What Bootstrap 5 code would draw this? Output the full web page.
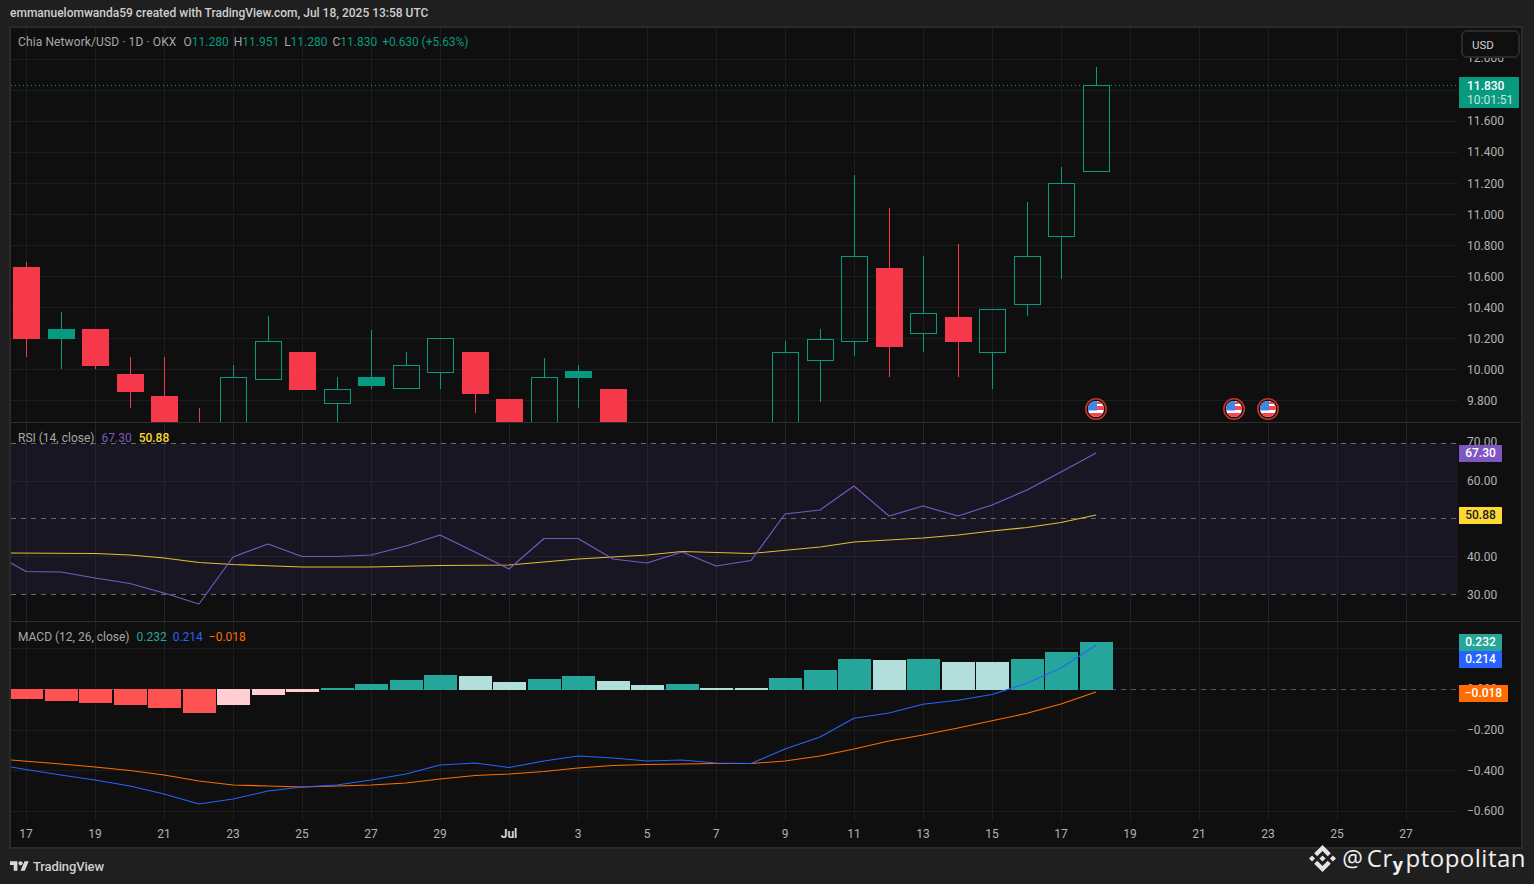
<!DOCTYPE html>
<html lang="en">
<head>
<meta charset="utf-8">
<title>Chia Network/USD chart</title>
<link href="https://cdn.jsdelivr.net/npm/bootstrap@5.3.0/dist/css/bootstrap.min.css" rel="stylesheet">
<style>
html,body{height:884px;overflow:hidden;margin:0}
body{background:#1f1f1f;color:#b8b8b8;font-family:Roboto,"Liberation Sans",sans-serif;font-size:12px;position:relative}
.snap-head{height:26px;padding-left:10px;font-size:12px;font-weight:500;color:#d0d0d0}
.chart-frame{margin-left:9px;width:1514px;height:823px;border:2px solid #2a2a2a;background:#0f0f0f}
.pane{width:100%;display:block}
.pane-main{height:394px}
.pane-rsi{height:198px}
.pane-macd{height:200px}
.pane-time{height:25px}
.pane-sep{height:1px;background:#2e2e2e}
svg text{font-family:Roboto,"Liberation Sans",sans-serif;font-size:12px;fill:#b2b2b2}
svg text.jul{font-weight:700;fill:#d8d8d8}
.legend-row{left:7px;font-size:12px;color:#a8a8a8;white-space:nowrap;line-height:16px;display:flex;gap:7px}
.legend-main{top:6px;gap:5px}
.legend-rsi{top:7px}
.legend-macd{top:7px;gap:6px}
.sym-name{letter-spacing:.11px;margin-right:2px}
.macd-name{margin-right:1px}
.last-chg{letter-spacing:-.07px}
.t-up{color:#089981}.t-purple{color:#7e57c2}.t-yellow{color:#fdd835;font-weight:500}.t-teal{color:#26a69a}.t-blue{color:#2962ff}.t-orange{color:#ff6d00}
.usd-btn{right:1px;top:2px;width:59px;height:28px;border:2px solid #2a2a2a;border-radius:6px;background:#0f0f0f;color:#d0d0d0;font-size:11.5px;padding:1px 0 0 9px;line-height:18px}
.price-tag{left:1448px;width:43px;height:17px;line-height:17px;text-align:center;font-size:12px;color:#fff;font-weight:500;border-radius:0 1px 1px 0}
.tag-last{top:49px;width:60px;height:31px;background:#089981;line-height:14px;text-align:left;padding:2px 0 0 8px}
.tag-last span{display:block;color:#c6e6df;font-weight:400}
.tag-rsi{top:22px;background:#7e57c2}
.tag-ma{top:84px;background:#fdd835;color:#222}
.tag-hist{top:12px;background:#26a69a}
.tag-mline{top:29px;background:#2962ff}
.tag-sig{top:63px;width:49px;background:#ff6d00}
.tv-foot{height:35px;padding-left:10px;gap:4px;color:#d0d0d0;font-size:13px;font-weight:500;letter-spacing:-.01em}
.wm{right:8px;bottom:12px;gap:4px;color:#f0f0f0}
.wm-logo{margin-right:2px}
.wm-at{font-family:"Open Sans",sans-serif;font-size:23px;line-height:28px}
.wm-name{font-family:"Open Sans",sans-serif;font-size:24px;line-height:28px;letter-spacing:.5px}
.wm-glitch{font-size:18px;font-weight:700;vertical-align:-4px;letter-spacing:2.5px;line-height:0}
</style>
</head>
<body>
<div class="snap-head d-flex align-items-center">emmanuelomwanda59 created with TradingView.com, Jul 18, 2025 13:58 UTC</div>
<div class="chart-frame d-flex flex-column">
  <div class="position-relative">
    <svg class="pane pane-main" id="pMain" viewBox="11 28 1510 394"></svg>
    <div class="legend-row legend-main position-absolute">
      <span class="sym-name">Chia Network/USD · 1D · OKX</span>
      <span>O<span class="t-up">11.280</span></span>
      <span>H<span class="t-up">11.951</span></span>
      <span>L<span class="t-up">11.280</span></span>
      <span>C<span class="t-up">11.830</span></span>
      <span class="t-up last-chg">+0.630 (+5.63%)</span>
    </div>
    <button type="button" class="usd-btn position-absolute text-start">USD</button>
    <div class="price-tag tag-last position-absolute">11.830<span>10:01:51</span></div>
  </div>
  <div class="pane-sep"></div>
  <div class="position-relative">
    <svg class="pane pane-rsi" id="pRsi" viewBox="11 423 1510 198"></svg>
    <div class="legend-row legend-rsi position-absolute"><span>RSI (14, close)</span><span class="t-purple">67.30</span><span class="t-yellow">50.88</span></div>
    <div class="price-tag tag-rsi position-absolute">67.30</div>
    <div class="price-tag tag-ma position-absolute">50.88</div>
  </div>
  <div class="pane-sep"></div>
  <div class="position-relative">
    <svg class="pane pane-macd" id="pMacd" viewBox="11 622 1510 200"></svg>
    <div class="legend-row legend-macd position-absolute"><span class="macd-name">MACD (12, 26, close)</span><span class="t-teal">0.232</span><span class="t-blue">0.214</span><span class="t-orange">−0.018</span></div>
    <div class="price-tag tag-hist position-absolute">0.232</div>
    <div class="price-tag tag-mline position-absolute">0.214</div>
    <div class="price-tag tag-sig position-absolute">−0.018</div>
  </div>
  <svg class="pane pane-time" id="pTime" viewBox="11 822 1510 25"></svg>
</div>
<div class="tv-foot d-flex align-items-center">
  <svg width="19" height="15" viewBox="0 0 36 28" fill="#d8d8d8" aria-hidden="true"><path d="M14 22H7V11H0V4h14v18zM28 22h-8l7.5-18h8L28 22z"/><circle cx="20" cy="8" r="4"/></svg>
  <span>TradingView</span>
</div>
<div class="wm position-absolute d-flex align-items-center">
  <svg class="wm-logo" width="27" height="27" viewBox="0 0 126.61 126.61" fill="#e4e4e4" aria-hidden="true"><path d="M38.73 53.2 63.3 28.63l24.58 24.58 14.3-14.3L63.3 0 24.43 38.9zM0 63.31l14.3-14.3 14.3 14.3-14.3 14.3zM38.73 73.41 63.3 97.99l24.58-24.58 14.3 14.29-38.88 38.91-38.87-38.89zM97.99 63.31l14.3-14.3 14.32 14.3-14.32 14.3zM77.83 63.29 63.3 48.75 48.79 63.27 63.3 77.79z"/></svg>
  <span class="wm-at">@</span>
  <span class="wm-name">Cr<span class="wm-glitch">y</span>ptopolitan</span>
</div>
<script>
(function(){
  var UP='#089981',DN='#f5384a',GRID='#1d1d1d';
  function X(i){return Math.round(26+34.5*i)+.5;}
  function vg(y1,y2,col){var s='';for(var k=0;k<21;k++){var x=26.5+69*k;s+='<line x1="'+x+'" x2="'+x+'" y1="'+y1+'" y2="'+y2+'" stroke="'+(col||GRID)+'"/>';}return s;}
  function hg(y,dash,col){return '<line x1="11" x2="1458" y1="'+y+'" y2="'+y+'" stroke="'+(col||GRID)+'"'+(dash?' stroke-dasharray="'+dash+'"':'')+'/>';}
  function lab(y,t){return '<text x="1467" y="'+(y+4)+'">'+t+'</text>';}
  function poly(p,c){return '<polyline fill="none" stroke="'+c+'" stroke-width="1.1" stroke-linejoin="round" points="'+p+'"/>';}
  function vl(x,a,b,c){return b>a?'<line x1="'+x+'" x2="'+x+'" y1="'+a+'" y2="'+b+'" stroke="'+c+'"/>':'';}
  /* main pane */
  var m=vg(28,422);
  [[59.3,'12.000',58],[90.3,''],[121.3,'11.600',120.5],[152.3,'11.400',151.5],[183.3,'11.200'],[214.3,'11.000'],[245.5,'10.800'],[276.5,'10.600'],[307.5,'10.400'],[338.5,'10.200'],[369.5,'10.000'],[400.5,'9.800']].forEach(function(g){
    var y=Math.round(g[0]-.5)+.5;m+=hg(y);if(g[1])m+=lab(g[2]||y,g[1]);
  });
  m+='<line x1="11" x2="1458" y1="85.5" y2="85.5" stroke="#089981" stroke-dasharray="1 3"/>';
  /* i, type(f up filled, h hollow, r red), top, bottom, wickTop, wickBottom */
  var C=[[0,'r',267,339,262,357],[1,'f',329,339,312,369],[2,'r',329,366,329,369],[3,'r',374,392,357,408],[4,'r',396,423,357,423],[5,'w',422,423,408,423],
  [6,'h',377,426,365,426],[7,'h',341,379,316,379],[8,'r',352,390,352,390],[9,'h',389,403,377,423],[10,'f',377,386,330,389],[11,'h',365,388,352,388],[12,'h',338,372,338,389],
  [13,'r',352,394,352,413],[14,'r',399,423,399,423],[15,'h',377,426,358,426],[16,'f',371,378,365,408],[17,'r',389,423,389,423],
  [22,'h',352,426,341,426],[23,'h',339,360,329,402],[24,'h',256,341,175,356],[25,'r',268,347,208,377],[26,'h',313,333,256,352],[27,'r',317,342,244,377],[28,'h',309,352,309,389],[29,'h',256,304,202,316],[30,'h',183,236,167,279],[31,'h',85,171,67,171]];
  C.forEach(function(c){
    var x=X(c[0]),col=(c[1]=='r'||c[1]=='w')?DN:UP;
    m+=vl(x,c[4],c[2],col)+vl(x,c[3],c[5],col);
    if(c[1]=='w')return;
    if(c[1]=='h')m+='<rect x="'+(x-13)+'" y="'+(c[2]+.5)+'" width="26" height="'+(c[3]-c[2])+'" fill="none" stroke="'+UP+'"/>';
    else m+='<rect x="'+(x-13.5)+'" y="'+c[2]+'" width="27" height="'+(c[3]-c[2])+'" fill="'+col+'"/>';
  });
  [1096,1234,1268].forEach(function(x,n){
    var id='fc'+n;
    m+='<clipPath id="'+id+'"><circle cx="'+x+'" cy="409" r="8"/></clipPath>'+
    '<circle cx="'+x+'" cy="409" r="10.2" fill="#111" stroke="#c9342a" stroke-width="1.6"/>'+
    '<g clip-path="url(#'+id+')"><rect x="'+(x-8)+'" y="401" width="16" height="16" fill="#fff"/>'+
    '<rect x="'+x+'" y="402" width="8" height="2" fill="#f5474f"/><rect x="'+x+'" y="406" width="8" height="4" fill="#f5474f"/><rect x="'+(x-8)+'" y="413" width="16" height="4" fill="#f5474f"/>'+
    '<rect x="'+(x-8)+'" y="401" width="9" height="9.5" fill="#3f86e8"/></g>';
  });
  document.getElementById('pMain').innerHTML=m;
  /* RSI pane */
  var r='<rect x="11" y="443.5" width="1447" height="150.5" fill="#191624"/>'+vg(423,621,'#25232f');
  r+=hg(481.5,0,'#25232f')+hg(556.5,0,'#25232f');
  [443.5,518.5,594.5].forEach(function(y){r+=hg(y,'5 5','#6a6a6a');});
  r+=lab(442,'70.00')+lab(480.5,'60.00')+lab(556.5,'40.00')+lab(594.5,'30.00');
  r+=poly('11,553 95,553.5 130,555 164,558 199,562.5 233,564.5 302,567 371,567 440,565.5 509,565 578,559 647,555 682,551.5 751,553.5 820,547 854,542 923,538 958,535 992,531 1027,527.5 1061,522.5 1096,515','#e0c030');
  r+=poly('11,563 26,571.5 61,572 95,578 130,583.5 164,593 199,604 233,557 268,544 302,556.5 337,556.5 371,555 406,546 440,535 475,552 509,569 544,538.5 578,538.5 613,559 647,563 682,552 716,566 751,560.5 785,514 820,510 854,486 889,516 923,506 958,516 992,505 1027,490 1061,472 1096,453','#7e57c2');
  document.getElementById('pRsi').innerHTML=r;
  /* MACD pane */
  var d=vg(622,821);
  [648.5,730.5,770.5,811.5].forEach(function(y){d+=hg(y);});
  d+=hg(689.5,'5 5','#555');
  d+=lab(689,'0.000')+lab(730,'−0.200')+lab(770.5,'−0.400')+lab(811,'−0.600');
  var H=[699,701,703,705,708,713,705,695,692,688,684,680,675,676,682,679,676,681,685,684,688,688,678,670,659,660,659,662,662,659,652,642];
  var L={6:1,7:1,8:1,13:1,14:1,17:1,18:1,20:1,21:1,25:1,27:1,28:1};
  H.forEach(function(v,i){
    var neg=i<9,x=X(i)-17,w=33,col=neg?(L[i]?'#ffcdd2':'#ff5252'):(L[i]?'#b2dfdb':'#26a69a');
    if(i==0){w=x+w-11;x=11;}
    var y=neg?689:v,h=neg?v-689:690-v;
    d+='<rect x="'+x+'" y="'+y+'" width="'+w+'" height="'+h+'" fill="'+col+'" shape-rendering="crispEdges"/>';
  });
  d+=poly('11,760 61,764 95,767 130,770.5 164,775 199,781 233,785 268,786 302,787 371,785 406,783 440,779 475,775.5 509,774 544,771.5 578,768 613,765.5 647,764.5 682,764 716,763.5 751,763.5 785,761 820,756 854,749 889,741 923,735 958,728 992,720.7 1027,713.3 1061,704 1096,692','#ff6d00');
  d+=poly('11,767 26,769.5 61,775 95,780 130,786 164,794 199,804 233,799 268,791 302,787 337,785 371,780 406,774 440,765 475,763 509,767.5 544,761 578,756 613,758 647,761 682,760 716,763 751,763.5 785,749 820,737 854,718.3 889,713 923,704.3 958,700.3 992,694.5 1027,683.3 1061,668 1096,645.3','#2962ff');
  document.getElementById('pMacd').innerHTML=d;
  /* time axis */
  var t='';
  ['17','19','21','23','25','27','29','Jul','3','5','7','9','11','13','15','17','19','21','23','25','27'].forEach(function(s,k){
    t+='<text x="'+(26+69*k)+'" y="838" text-anchor="middle"'+(s=='Jul'?' class="jul"':'')+'>'+s+'</text>';
  });
  document.getElementById('pTime').innerHTML=t;
})();
</script>
<script src="https://cdn.jsdelivr.net/npm/bootstrap@5.3.0/dist/js/bootstrap.bundle.min.js"></script>
</body>
</html>
